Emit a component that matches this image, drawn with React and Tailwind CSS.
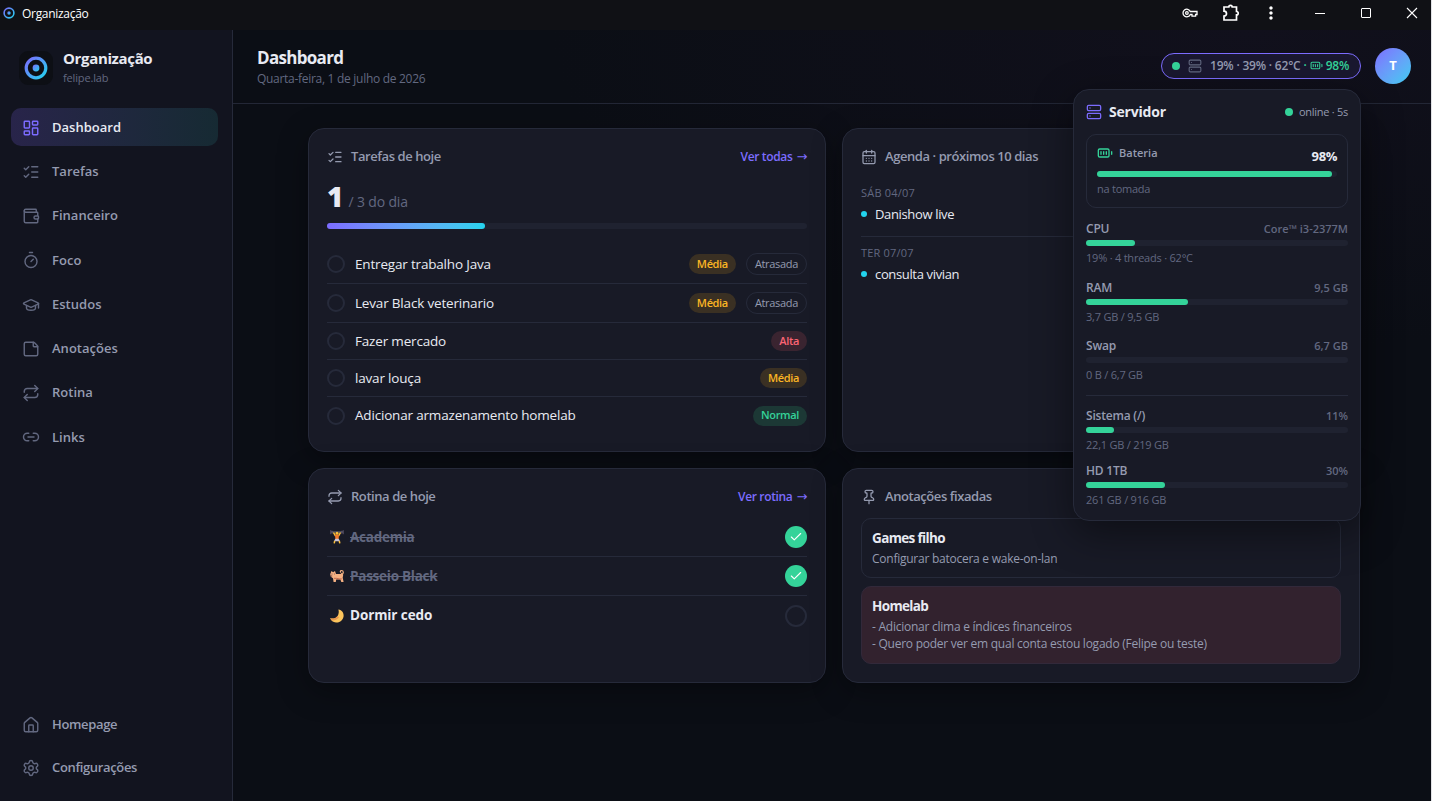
import clsx from "clsx";
import {
  BatteryFull,
  CalendarDays,
  Check,
  GraduationCap,
  House,
  LayoutDashboard,
  Link2,
  ListChecks,
  Pin,
  Repeat,
  Server,
  Settings,
  StickyNote,
  Timer,
  Wallet,
} from "lucide-react";
import { MdMoreVert } from "react-icons/md";

const navItems = [
  { label: "Dashboard", icon: LayoutDashboard, active: true },
  { label: "Tarefas", icon: ListChecks },
  { label: "Financeiro", icon: Wallet },
  { label: "Foco", icon: Timer },
  { label: "Estudos", icon: GraduationCap },
  { label: "Anotações", icon: StickyNote },
  { label: "Rotina", icon: Repeat },
  { label: "Links", icon: Link2 },
];

const footerItems = [
  { label: "Homepage", icon: House },
  { label: "Configurações", icon: Settings },
];

const tasks = [
  { title: "Entregar trabalho Java", priority: "Média", late: true },
  { title: "Levar Black veterinario", priority: "Média", late: true },
  { title: "Fazer mercado", priority: "Alta" },
  { title: "lavar louça", priority: "Média" },
  { title: "Adicionar armazenamento homelab", priority: "Normal" },
];

const priorityStyles = {
  Média: "bg-[#3a3023] text-[#fbb524]",
  Alta: "bg-[#3a2430] text-[#fb6474]",
  Normal: "bg-[#1c3835] text-[#34d399]",
};

const agenda = [
  { day: "SÁB 04/07", title: "Danishow live" },
  { day: "TER 07/07", title: "consulta vivian" },
];

const routines = [
  { title: "Academia", icon: LifterIcon, done: true },
  { title: "Passeio Black", icon: DogIcon, done: true },
  { title: "Dormir cedo", icon: MoonIcon, done: false },
];

function Logo({ className, id }) {
  return (
    <svg viewBox="0 0 24 24" className={className} fill="none">
      <defs>
        <linearGradient id={id} x1="0" y1="0" x2="1" y2="1">
          <stop stopColor="#7c6cff" />
          <stop offset="1" stopColor="#22d3ee" />
        </linearGradient>
      </defs>
      <circle cx="12" cy="12" r="9.8" stroke={`url(#${id})`} strokeWidth="3.2" />
      <circle cx="12" cy="12" r="3.4" fill={`url(#${id})`} />
    </svg>
  );
}

function LifterIcon() {
  return (
    <svg viewBox="0 0 16 16" className="size-4">
      <path d="M2 3h12" stroke="#8b8b9c" strokeWidth="0.8" />
      <path d="M1.8 1.2v4M3.2 1.8v2.8M14.2 1.2v4M12.8 1.8v2.8" stroke="#5c536b" strokeWidth="1" />
      <path d="M4.5 3.5 6.2 6.5h3.6l1.7-3" fill="none" stroke="#fbbf3c" strokeWidth="1.5" />
      <circle cx="8" cy="4.2" r="1.5" fill="#fbbf3c" />
      <path d="M6 5.8h4l-.4 4.4H6.4z" fill="#f4792c" />
      <path d="M6.3 9.8h3.4l1.3 2.4H5z" fill="#c9c6d8" />
      <path d="m5.7 11.8-.5 2.6M10.3 11.8l.5 2.6" stroke="#fbbf3c" strokeWidth="1.5" />
    </svg>
  );
}

function DogIcon() {
  return (
    <svg viewBox="0 0 16 16" className="size-4">
      <path
        d="M1.2 6.2 2.5 3l1.6 1.3L6 3l1 3h4.5l1.4-1.2 1.3 2-.5 3 .9 4.2h-2.3l-.9-2.6H7.2l-.4 2.6H4.6L4 10.2 1.8 8.8z"
        fill="#f5b183"
      />
      <path d="M12.6 6.5c2.4-.6 2.2-4-.2-4-1.3 0-1.4 1.6-.3 1.7" fill="none" stroke="#f5b183" strokeWidth="1.2" />
      <path d="M5 10.3h2.2l3 .6h2.6" fill="none" stroke="#c2694f" strokeWidth="1" />
      <path d="M2.6 6h.8M5 6h.7M1.8 8h1.4" stroke="#5b3440" strokeWidth="0.9" />
    </svg>
  );
}

function MoonIcon() {
  return (
    <svg viewBox="0 0 16 16" className="size-4">
      <path
        d="M9.4 1.5c3.5.6 5.6 3.4 5.2 6.8-.5 4-3.8 6.6-7.6 6.2-2.9-.3-5-2-5.9-4.3 3 1 6-.1 7.5-2.3 1.2-1.9 1.5-4.2.8-6.4z"
        fill="#fbc45c"
      />
      <path d="M1.1 10.2c3 1 6-.1 7.5-2.3l1.4 1.7c-2 2.2-5 3.3-7.2 2.9z" fill="#e9964f" />
    </svg>
  );
}

function KeyIcon({ className }) {
  return (
    <svg viewBox="0 0 16 10" className={className} fill="none" stroke="currentColor" strokeWidth="1.3">
      <path d="M8.3 3.5A3.8 3.8 0 1 0 8.3 6.5H10v1.6h3.6V6.5H15v-3z" />
      <circle cx="4.9" cy="5" r="1.3" />
    </svg>
  );
}

function PuzzleIcon({ className }) {
  return (
    <svg viewBox="0 0 18 18" className={className} fill="none" stroke="currentColor" strokeWidth="1.7">
      <path d="M2 3h4.8a1.7 1.7 0 0 1 3.4 0H14.5v4.5a1.7 1.7 0 0 1 0 3.4V16H2v-3.8a2.5 2.5 0 0 0 0-5z" />
    </svg>
  );
}

function TitleBar() {
  return (
    <div className="flex h-[30px] shrink-0 items-center justify-between bg-[#101115] pl-[3px] text-white">
      <div className="flex items-center gap-[7px] pb-1">
        <Logo className="size-3" id="tab-logo" />
        <span className="pt-0.5 text-[12px] leading-4 tracking-[-0.3px]">Organização</span>
      </div>
      <div className="flex items-center pr-[13px] pb-1">
        <KeyIcon className="mr-6 h-[10px] w-4" />
        <PuzzleIcon className="mr-[21px] size-[18px]" />
        <MdMoreVert className="mr-[34px] size-5" />
        <span className="mr-9 h-px w-[10px] bg-white" />
        <span className="mr-[35px] size-[10px] rounded-[1px] border border-white" />
        <svg viewBox="0 0 12 12" className="size-3 stroke-white" fill="none">
          <path d="m1 1 10 10M11 1 1 11" strokeWidth="1.1" />
        </svg>
      </div>
    </div>
  );
}

function NavItem({ item, className }) {
  const Icon = item.icon;
  return (
    <a
      className={clsx(
        "flex h-[38px] items-center gap-3 rounded-[10px] px-[11px] text-[13px] font-semibold",
        item.active
          ? "bg-gradient-to-r from-[#28244a] to-[#162a33] text-[#e8eaf2]"
          : "text-[#959bb0]",
        className,
      )}
    >
      <Icon
        className={clsx("size-[18px]", item.active ? "text-[#7c6cff]" : "text-[#626880]")}
        strokeWidth={1.9}
      />
      <span>{item.label}</span>
    </a>
  );
}

function Sidebar() {
  return (
    <aside className="flex w-[233px] shrink-0 flex-col border-r border-[#262a3a] bg-[#12141f] pr-[14px] pl-[11px]">
      <div className="flex items-center gap-[10px] pt-[19px] pl-2">
        <div className="flex size-[34px] items-center justify-center rounded-[9px] bg-[#0d0f15]">
          <Logo className="size-6" id="side-logo" />
        </div>
        <div>
          <div className="text-[15px] leading-[18px] font-bold tracking-[-0.35px] text-[#e8eaf2]">Organização</div>
          <div className="mt-[3px] text-[11px] leading-4 tracking-[-0.15px] text-[#626880]">felipe.lab</div>
        </div>
      </div>
      <nav className="mt-[22px] flex flex-col gap-[6.25px]">
        {navItems.map((item) => (
          <NavItem key={item.label} item={item} className="pt-px tracking-[0.02px]" />
        ))}
      </nav>
      <nav className="mt-auto flex flex-col gap-[5px] pb-[14px]">
        {footerItems.map((item) => (
          <NavItem key={item.label} item={item} className="tracking-[-0.35px]" />
        ))}
      </nav>
    </aside>
  );
}

function Header() {
  return (
    <header className="flex h-[74px] shrink-0 items-center justify-between border-b border-[#232736] pr-5 pl-6">
      <div>
        <h1 className="text-[17px] leading-6 font-bold tracking-[-0.7px] text-[#e8eaf2]">Dashboard</h1>
        <p className="text-[12px] leading-[17px] tracking-[-0.29px] text-[#626880]">Quarta-feira, 1 de julho de 2026</p>
      </div>
      <div className="flex items-center gap-[14px] pb-[2px]">
        <button className="flex h-[26px] w-[200px] items-center rounded-full border border-[#7c6cff] bg-[#1a1830] pl-[10px] text-[12px] font-semibold text-[#959bb0]">
          <span className="mr-2 size-2 rounded-full bg-[#34d399]" />
          <Server className="mr-2 size-[14px] text-[#626880]" strokeWidth={1.9} />
          <span className="tracking-[-0.2px]">19% · 39% · 62°C</span>
          <span className="ml-[3px] flex items-center tracking-[-0.15px] text-[#34d399]">
            ·
            <BatteryFull className="mr-[3px] ml-[3px] size-[13px]" strokeWidth={2} />
            98%
          </span>
        </button>
        <div className="flex size-9 items-center justify-center rounded-full bg-gradient-to-br from-[#7c6cff] to-[#35ccf0] text-[13px] font-bold text-white">
          T
        </div>
      </div>
    </header>
  );
}

function Card({ icon: Icon, title, action, className, children }) {
  return (
    <section
      className={clsx(
        "rounded-2xl border border-[#262a3a] bg-[#181a26] px-[18px] shadow-[0_8px_30px_rgba(0,0,0,0.35)]",
        className,
      )}
    >
      <div className="flex h-[18px] items-center text-[13px] font-semibold text-[#959bb0]">
        <Icon className="mr-2 size-4" strokeWidth={1.9} />
        <h2 className="tracking-[-0.43px]">{title}</h2>
        {action && (
          <a className="ml-auto flex items-center gap-1 text-[12px] tracking-[-0.35px] text-[#7c6cff]">
            {action}
            <span className="font-['DejaVu_Sans',sans-serif] text-[13px] leading-4 font-normal">→</span>
          </a>
        )}
      </div>
      {children}
    </section>
  );
}

function Tasks() {
  return (
    <Card icon={ListChecks} title="Tarefas de hoje" action="Ver todas" className="h-[324px] pt-[19px]">
      <div className="mt-[10px] flex h-10 items-baseline gap-[6px]">
        <span className="text-[28px] leading-10 font-extrabold text-[#e8eaf2]">1</span>
        <span className="-ml-px text-[14px] tracking-[-0.15px] text-[#626880]">/ 3 do dia</span>
      </div>
      <div className="mt-[7px] h-[6px] rounded-full bg-[#1f2230]">
        <div className="h-full w-[33%] rounded-full bg-gradient-to-r from-[#7c6cff] to-[#22d3ee]" />
      </div>
      <ul className="mt-4 divide-y divide-[#262a3a]">
        {tasks.map((task) => (
          <li key={task.title} className={clsx("flex items-center", task.late ? "h-[39px]" : "h-[37px]")}>
            <span className="mr-[10px] size-[18px] rounded-full border-2 border-[#262a3a]" />
            <span className="text-[13.5px] tracking-[-0.18px] text-[#e8eaf2]">{task.title}</span>
            <div className="ml-auto flex items-center gap-[10px]">
              <span
                className={clsx(
                  "flex h-5 items-center rounded-full px-2 text-[11px] font-semibold tracking-[-0.35px]",
                  priorityStyles[task.priority],
                )}
              >
                {task.priority}
              </span>
              {task.late && (
                <span className="flex h-[22px] items-center rounded-full border border-[#262a3a] px-2 text-[11px] tracking-[-0.32px] text-[#959bb0]">
                  Atrasada
                </span>
              )}
            </div>
          </li>
        ))}
      </ul>
    </Card>
  );
}

function Agenda() {
  return (
    <Card icon={CalendarDays} title="Agenda · próximos 10 dias" className="h-[324px] pt-[19px]">
      <ul className="mt-[11px] divide-y divide-[#262a3a]">
        {agenda.map((event) => (
          <li key={event.day} className="h-[60px] pt-2">
            <div className="text-[11px] leading-4 tracking-[0.2px] text-[#626880]">{event.day}</div>
            <div className="mt-[3px] flex items-center gap-2 text-[13px] leading-5 tracking-[-0.35px] text-[#e8eaf2]">
              <span className="size-1.5 rounded-full bg-[#22d3ee]" />
              {event.title}
            </div>
          </li>
        ))}
      </ul>
    </Card>
  );
}

function Routine() {
  return (
    <Card icon={Repeat} title="Rotina de hoje" action="Ver rotina" className="h-[215px] pt-[19px]">
      <ul className="mt-3 divide-y divide-[#262a3a]">
        {routines.map(({ title, icon: Icon, done }) => (
          <li key={title} className="flex h-[39px] items-center">
            <span className="mr-[5px] ml-0.5">
              <Icon />
            </span>
            <span
              className={clsx(
                "text-[13.5px] font-bold",
                done ? "tracking-[-0.25px] text-[#626880] line-through" : "tracking-[-0.1px] text-[#e8eaf2]",
              )}
            >
              {title}
            </span>
            {done ? (
              <span className="ml-auto flex size-[22px] items-center justify-center rounded-full bg-[#34d399] text-white">
                <Check className="size-[14px]" strokeWidth={1.9} />
              </span>
            ) : (
              <span className="ml-auto size-[22px] rounded-full border-2 border-[#262a3a]" />
            )}
          </li>
        ))}
      </ul>
    </Card>
  );
}

function Note({ title, className, children }) {
  return (
    <article className={clsx("rounded-[10px] border px-[10px] pt-[10px]", className)}>
      <h3 className="text-[13.5px] leading-[18px] font-bold tracking-[-0.65px] text-[#e8eaf2]">{title}</h3>
      <p className="mt-[3px] text-[12px] leading-[17px] tracking-[-0.25px] whitespace-pre-line text-[#959bb0]">
        {children}
      </p>
    </article>
  );
}

function Notes() {
  return (
    <Card icon={Pin} title="Anotações fixadas" className="h-[215px] pt-[19px]">
      <div className="mt-3 flex flex-col gap-2">
        <Note title="Games filho" className="h-[60px] border-[#262a3a]">
          Configurar batocera e wake-on-lan
        </Note>
        <Note title="Homelab" className="h-[78px] border-[#32293a] bg-[#32222e]">
          {"- Adicionar clima e índices financeiros\n- Quero poder ver em qual conta estou logado (Felipe ou teste)"}
        </Note>
      </div>
    </Card>
  );
}

function Bar({ value }) {
  return (
    <div className="h-[6px] rounded-full bg-[#1f2230]">
      <div className="h-full rounded-full bg-[#34d399]" style={{ width: `${value}%` }} />
    </div>
  );
}

function Meter({ label, right, value, detail, className }) {
  return (
    <div className={className}>
      <div className="flex h-4 items-center justify-between font-semibold">
        <span className="text-[12px] tracking-[-0.2px] text-[#959bb0]">{label}</span>
        <span className="text-[11px] text-[#626880]">{right}</span>
      </div>
      <div className="mt-[3px]">
        <Bar value={value} />
      </div>
      <div className="mt-1 text-[11px] leading-4 tracking-[-0.22px] text-[#626880]">{detail}</div>
    </div>
  );
}

function ServerPanel() {
  return (
    <div className="absolute top-[89px] right-[70px] h-[432px] w-[288px] rounded-2xl border border-[#262a3a] bg-[#181a26] px-3 pt-[13px] shadow-[0_12px_40px_rgba(0,0,0,0.45)]">
      <div className="flex h-[18px] items-center leading-[16px]">
        <Server className="mr-[7px] size-4 text-[#7c6cff]" strokeWidth={1.9} />
        <span className="text-[14px] font-bold tracking-[-0.2px] text-[#e8eaf2]">Servidor</span>
        <span className="mr-1.5 ml-auto size-2 rounded-full bg-[#34d399]" />
        <span className="text-[11px] tracking-[-0.27px] text-[#959bb0]">online · 5s</span>
      </div>
      <div className="mt-[13px] h-[74px] rounded-[10px] border border-[#262a3a] px-[10px] pt-[10px]">
        <div className="flex h-5 items-start justify-between">
          <span className="flex items-center text-[11px] leading-4 font-semibold text-[#959bb0]">
            <BatteryFull className="mr-1.5 size-4 text-[#34d399]" strokeWidth={2} />
            Bateria
          </span>
          <span className="pt-[3px] text-[13px] leading-4 font-bold tracking-[-0.4px] text-[#e8eaf2]">98%</span>
        </div>
        <div className="mt-1.5">
          <Bar value={98} />
        </div>
        <div className="mt-1 text-[11px] leading-4 tracking-[-0.25px] text-[#626880]">na tomada</div>
      </div>
      <Meter label="CPU" right="Core™ i3-2377M" value={18.7} detail="19% · 4 threads · 62°C" className="mt-[13px]" />
      <Meter label="RAM" right="9,5 GB" value={39} detail="3,7 GB / 9,5 GB" className="mt-[14px]" />
      <Meter label="Swap" right="6,7 GB" value={0} detail="0 B / 6,7 GB" className="mt-[13px]" />
      <div className="mt-3 border-t border-[#262a3a]" />
      <Meter label="Sistema (/)" right="11%" value={10.7} detail="22,1 GB / 219 GB" className="mt-[12px]" />
      <Meter label="HD 1TB" right="30%" value={30} detail="261 GB / 916 GB" className="mt-[10px]" />
    </div>
  );
}

export default function App() {
  return (
    <div className="relative flex h-[801px] w-full flex-col overflow-hidden border-r border-[#e2e3e6] bg-[#0b0e15] font-['Open_Sans','Segoe_UI',sans-serif]">
      <TitleBar />
      <div className="flex min-h-0 flex-1">
        <Sidebar />
        <div className="flex flex-1 flex-col bg-[radial-gradient(700px_320px_at_85%_0%,#11101c,transparent)]">
          <Header />
          <main className="grid grid-cols-[518px_518px] gap-4 pt-6 pl-[75px]">
            <Tasks />
            <Agenda />
            <Routine />
            <Notes />
          </main>
        </div>
      </div>
      <ServerPanel />
    </div>
  );
}
